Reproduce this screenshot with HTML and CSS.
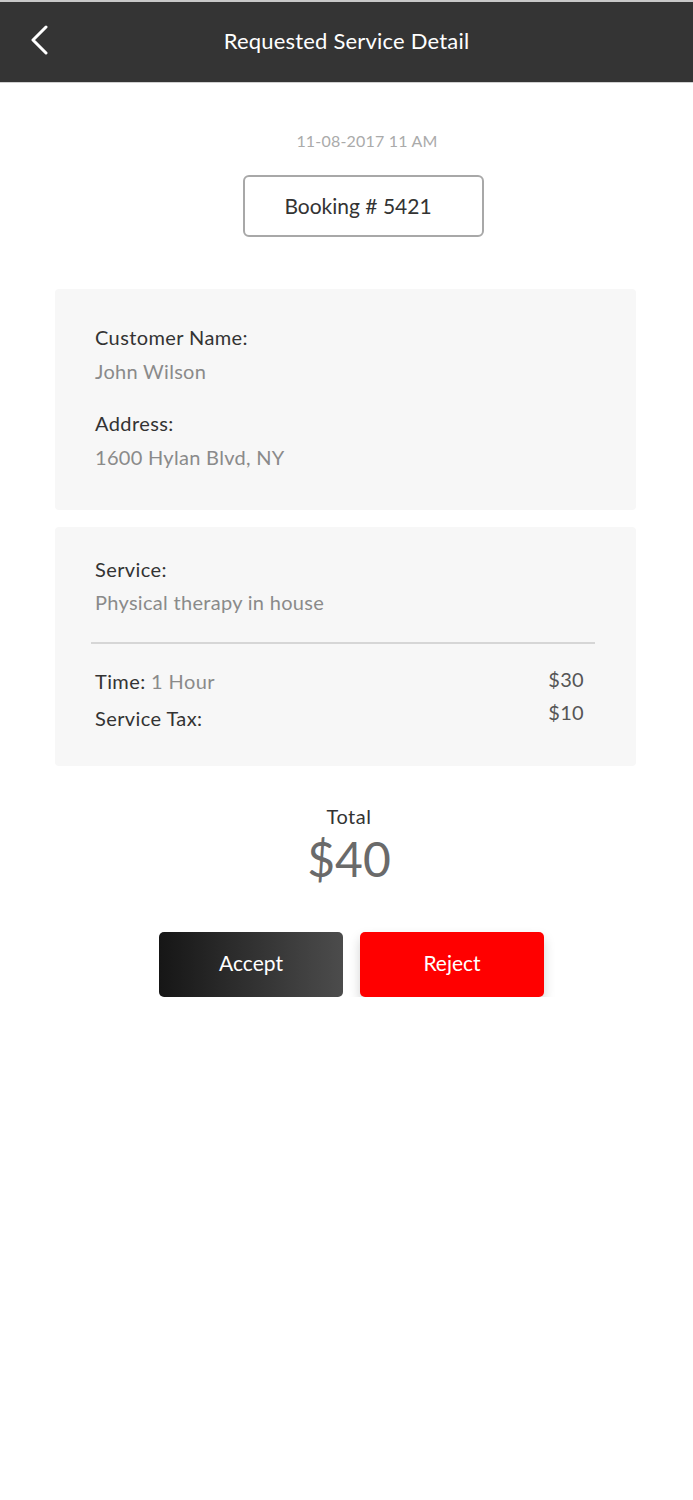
FILE: index.html
```html
<!DOCTYPE html>
<html>
<head>
<meta charset="utf-8">
<link rel="stylesheet" href="styles.css">
</head>
<body>
<header class="topbar">
  <span class="back">
    <svg width="20" height="30" viewBox="0 0 20 30"><path d="M16 2 L3 15 L16 28" fill="none" stroke="#fff" stroke-width="3" stroke-linecap="round" stroke-linejoin="round"/></svg>
  </span>
  <h1 class="title">Requested Service Detail</h1>
</header>
<main class="content">
  <div class="date">11-08-2017 11 AM</div>
  <div class="booking">Booking # 5421</div>

  <section class="card card-customer">
    <div class="label">Customer Name:</div>
    <div class="value">John Wilson</div>
    <div class="label label-gap">Address:</div>
    <div class="value">1600 Hylan Blvd, NY</div>
  </section>

  <section class="card card-service">
    <div class="label">Service:</div>
    <div class="value">Physical therapy in house</div>
    <hr class="divider">
    <div class="row">
      <div class="label">Time: <span class="muted">1 Hour</span></div>
      <div class="price">$30</div>
    </div>
    <div class="row row2">
      <div class="label">Service Tax:</div>
      <div class="price">$10</div>
    </div>
  </section>

  <div class="total">
    <div class="total-label">Total</div>
    <div class="total-amount">$40</div>
  </div>

  <div class="actions">
    <button class="btn btn-accept">Accept</button>
    <button class="btn btn-reject">Reject</button>
  </div>
</main>
</body>
</html>
```
FILE: styles.css
```css
* { box-sizing: border-box; }
html, body { margin: 0; padding: 0; background: #fff; }
body {
  font-family: "Lato", "Noto Sans", sans-serif;
  color: #333;
  width: 693px;
}
.topbar {
  height: 83px;
  background: #343434;
  border-top: 2px solid #c8c8c8;
  border-bottom: 1px solid #d0d0d0;
  padding-bottom: 3px;
  display: flex;
  align-items: center;
  justify-content: center;
  position: relative;
}
.back {
  position: absolute;
  left: 30px;
  top: 23px;
  display: flex;
}
.title {
  margin: 0;
  font-size: 22px;
  font-weight: 400;
  color: #fff;
  letter-spacing: 0.2px;
}
.content {
  display: flex;
  flex-direction: column;
  align-items: center;
}
.date {
  margin-top: 49px;
  margin-left: 41px;
  font-size: 16px;
  letter-spacing: 0.2px;
  color: #aaa;
  line-height: 18px;
}
.booking {
  margin-top: 25px;
  margin-left: 33px;
  width: 241px;
  height: 62px;
  border: 2px solid #a8a8a8;
  border-radius: 6px;
  display: flex;
  align-items: center;
  justify-content: center;
  padding-right: 10px;
  padding-bottom: 2px;
  font-size: 21px;
  color: #333;
}
.card {
  width: 581px;
  margin-left: -2px;
  background: #f7f7f7;
  border-radius: 4px;
  padding-left: 40px;
}
.card-customer {
  margin-top: 52px;
  height: 221px;
  padding-top: 35px;
}
.card-service {
  margin-top: 17px;
  height: 239px;
  padding-top: 29px;
  padding-right: 52px;
}
.label {
  font-size: 20px;
  line-height: 26px;
  letter-spacing: 0.4px;
  color: #333;
}
.value {
  font-size: 20px;
  line-height: 26px;
  letter-spacing: 0.3px;
  color: #8a8a8a;
  margin-top: 8px;
}
.card-service .value { margin-top: 7px; }
.label-gap { margin-top: 26px; }
.muted { color: #8a8a8a; }
.divider {
  border: 0;
  border-top: 2px solid #d6d6d6;
  margin: 27px 0 0 -4px;
  width: 504px;
}
.row {
  display: flex;
  justify-content: space-between;
  align-items: flex-start;
  margin-top: 24px;
}
.row2 { margin-top: 11px; }
.row2 .price { margin-top: -6px; }
.price {
  font-size: 20px;
  line-height: 26px;
  letter-spacing: 0.3px;
  color: #555;
  margin-top: -2px;
}
.total {
  margin-top: 39px;
  margin-left: 5px;
  text-align: center;
}
.total-label {
  font-size: 20px;
  line-height: 22px;
  letter-spacing: 0.5px;
  color: #333;
}
.total-amount {
  margin-top: 4px;
  font-size: 48px;
  line-height: 56px;
  font-weight: 400;
  color: #6a6a6a;
}
.actions {
  margin-top: 45px;
  margin-left: 10px;
  display: flex;
  gap: 17px;
}
.btn {
  width: 184px;
  height: 65px;
  border: 0;
  border-radius: 5px;
  padding: 0 0 4px;
  font-family: inherit;
  font-size: 21px;
  color: #fff;
  cursor: pointer;
}
.btn-accept {
  background: linear-gradient(90deg, #161616 0%, #4c4c4c 100%);
}
.btn-reject {
  background: #ff0000;
  box-shadow: 0 6px 12px rgba(0, 0, 0, 0.18);
}
```
